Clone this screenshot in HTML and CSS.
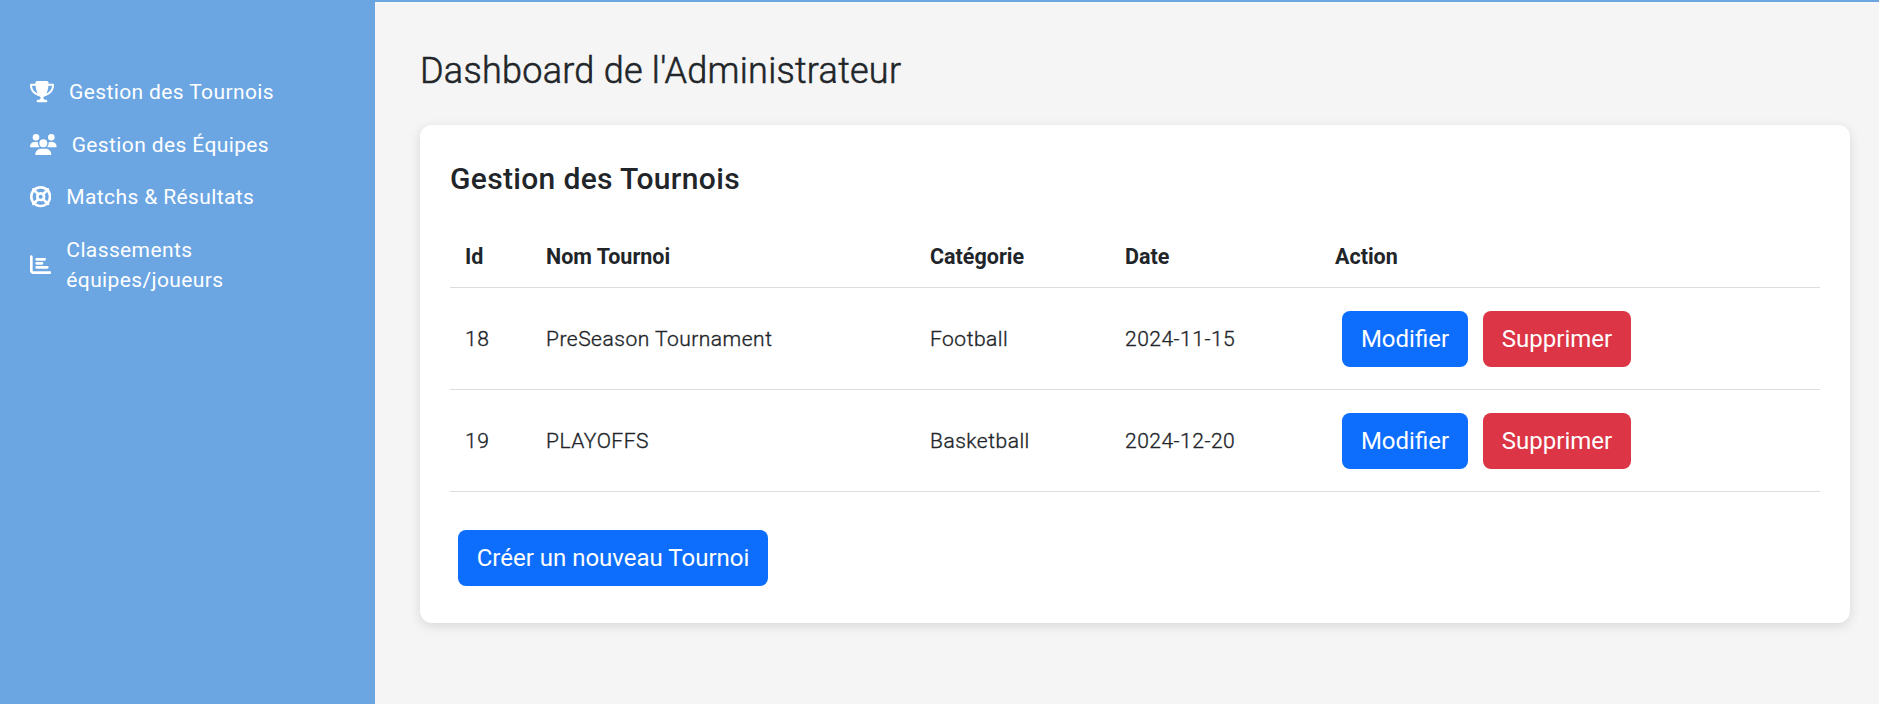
FILE: index.html
```
<!DOCTYPE html>
<html lang="fr">
<head>
<meta charset="utf-8">
<title>Dashboard de l'Administrateur</title>
<link rel="stylesheet" href="styles.css">
</head>
<body>
<div class="layout">
  <nav class="sidebar">
    <a class="nav-link">
      <svg class="icon icon-trophy" viewBox="0 0 576 512"><path d="M400 0H176c-26.5 0-48.1 21.8-47.1 48.2c.2 5.3 .4 10.6 .7 15.8H24C10.7 64 0 74.7 0 88c0 92.6 33.5 157 78.5 200.7c44.3 43.1 98.3 64.8 138.1 75.8c23.4 6.5 39.4 26 39.4 45.6c0 20.9-17 37.9-37.9 37.9H192c-17.7 0-32 14.3-32 32s14.3 32 32 32H384c17.7 0 32-14.3 32-32s-14.3-32-32-32H357.9C337 448 320 431 320 410.1c0-19.6 15.9-39.2 39.4-45.6c39.9-11 93.9-32.7 138.2-75.8C542.5 245 576 180.6 576 88c0-13.3-10.7-24-24-24H446.4c.3-5.2 .5-10.4 .7-15.8C448.1 21.8 426.5 0 400 0zM48.9 112h84.4c9.1 90.1 29.2 150.3 51.9 190.6c-24.9-11-50.8-26.5-73.2-48.3c-32-31.1-58-76-63-142.3zM464.1 254.3c-22.4 21.8-48.3 37.3-73.2 48.3c22.7-40.3 42.8-100.5 51.9-190.6h84.4c-5.1 66.3-31.1 111.2-63 142.3z"/></svg>
      <span>Gestion des Tournois</span>
    </a>
    <a class="nav-link">
      <svg class="icon icon-users" viewBox="0 0 640 512"><path d="M144 0a80 80 0 1 1 0 160A80 80 0 1 1 144 0zM512 0a80 80 0 1 1 0 160A80 80 0 1 1 512 0zM0 298.7C0 239.8 47.8 192 106.7 192h42.7c15.9 0 31 3.5 44.6 9.7c-1.3 7.2-1.9 14.7-1.9 22.3c0 38.2 16.8 72.5 43.3 96c-.2 0-.4 0-.7 0H21.3C9.6 320 0 310.4 0 298.7zM405.3 320c-.2 0-.4 0-.7 0c26.6-23.5 43.3-57.8 43.3-96c0-7.6-.7-15-1.9-22.3c13.6-6.3 28.7-9.7 44.6-9.7h42.7C592.2 192 640 239.8 640 298.7c0 11.8-9.6 21.3-21.3 21.3H405.3zM224 224a96 96 0 1 1 192 0 96 96 0 1 1 -192 0zM128 485.3C128 411.7 187.7 352 261.3 352H378.7C452.3 352 512 411.7 512 485.3c0 14.7-11.9 26.7-26.7 26.7H154.7c-14.7 0-26.7-11.9-26.7-26.7z"/></svg>
      <span>Gestion des Équipes</span>
    </a>
    <a class="nav-link">
      <svg class="icon" viewBox="0 0 512 512"><path d="M367.2 412.5C335.9 434.9 297.5 448 256 448s-79.9-13.1-111.2-35.5l58-58c15.8 8.6 34 13.5 53.3 13.5s37.4-4.9 53.3-13.5l58 58zm90.7 .8c33.8-43.4 54-98 54-157.3s-20.2-113.9-54-157.3c9-12.5 7.9-30.1-3.4-41.3S425.8 45 413.3 54C369.9 20.2 315.3 0 256 0S142.1 20.2 98.7 54c-12.5-9-30.1-7.9-41.3 3.4S45 86.2 54 98.7C20.2 142.1 0 196.7 0 256s20.2 113.9 54 157.3c-9 12.5-7.9 30.1 3.4 41.3S86.2 467 98.7 458c43.4 33.8 98 54 157.3 54s113.9-20.2 157.3-54c12.5 9 30.1 7.9 41.3-3.4s12.4-28.8 3.4-41.3zm-45.5-46.1l-58-58c8.6-15.8 13.5-34 13.5-53.3s-4.9-37.4-13.5-53.3l58-58C434.9 176.1 448 214.5 448 256s-13.1 79.9-35.5 111.2zM367.2 99.5l-58 58c-15.8-8.6-34-13.5-53.3-13.5s-37.4 4.9-53.3 13.5l-58-58C176.1 77.1 214.5 64 256 64s79.9 13.1 111.2 35.5zM157.5 309.3l-58 58C77.1 335.9 64 297.5 64 256s13.1-79.9 35.5-111.2l58 58c-8.6 15.8-13.5 34-13.5 53.3s4.9 37.4 13.5 53.3zM208 256a48 48 0 1 1 96 0 48 48 0 1 1 -96 0z"/></svg>
      <span>Matchs &amp; Résultats</span>
    </a>
    <a class="nav-link">
      <svg class="icon" viewBox="0 0 512 512"><path d="M32 32c17.7 0 32 14.3 32 32V400c0 8.8 7.2 16 16 16H480c17.7 0 32 14.3 32 32s-14.3 32-32 32H80c-44.2 0-80-35.8-80-80V64C0 46.3 14.3 32 32 32zm96 96c0-17.7 14.3-32 32-32l192 0c17.7 0 32 14.3 32 32s-14.3 32-32 32l-192 0c-17.7 0-32-14.3-32-32zm32 64H288c17.7 0 32 14.3 32 32s-14.3 32-32 32H160c-17.7 0-32-14.3-32-32s14.3-32 32-32zm0 96H416c17.7 0 32 14.3 32 32s-14.3 32-32 32H160c-17.7 0-32-14.3-32-32s14.3-32 32-32z"/></svg>
      <span>Classements<br>équipes/joueurs</span>
    </a>
  </nav>
  <main class="content">
    <h1 class="page-title">Dashboard de l'Administrateur</h1>
    <section class="card">
      <h2 class="card-title">Gestion des Tournois</h2>
      <table class="table">
        <colgroup><col class="col-id"><col class="col-name"><col class="col-category"><col class="col-date"><col></colgroup>
        <thead>
          <tr><th>Id</th><th>Nom Tournoi</th><th>Catégorie</th><th>Date</th><th>Action</th></tr>
        </thead>
        <tbody>
          <tr><td>18</td><td>PreSeason Tournament</td><td>Football</td><td>2024-11-15</td>
            <td><div class="actions"><button class="btn btn-primary btn-edit">Modifier</button><button class="btn btn-danger">Supprimer</button></div></td></tr>
          <tr><td>19</td><td>PLAYOFFS</td><td>Basketball</td><td>2024-12-20</td>
            <td><div class="actions"><button class="btn btn-primary btn-edit">Modifier</button><button class="btn btn-danger">Supprimer</button></div></td></tr>
        </tbody>
      </table>
      <button class="btn btn-primary btn-create">Créer un nouveau Tournoi</button>
    </section>
  </main>
</div>
</body>
</html>
```
FILE: styles.css
```
* { box-sizing: border-box; }

body {
  margin: 0;
  background: #f5f5f5;
  color: #212529;
  font-family: Roboto, sans-serif;
  font-size: 21px;
  line-height: 30px;
}

.layout { display: flex; height: 704px; overflow: hidden; }

.sidebar {
  display: flex;
  flex-direction: column;
  gap: 22.5px;
  width: 375px;
  flex: none;
  padding: 77px 30px 0;
  background: #6ba6e3;
  color: #fff;
  letter-spacing: 0.38px;
}

.nav-link { display: flex; align-items: center; gap: 15px; }

.icon { width: 21.33px; height: 21.33px; flex: none; fill: #fff; }
.icon-trophy { width: 24px; }
.icon-users { width: 26.67px; }

.content {
  flex: 1;
  padding: 47px 29px 0 45px;
  border-top: 2px solid #6ba6e3;
}

.page-title {
  margin: 0 0 31px;
  font-size: 36px;
  line-height: 45px;
  font-weight: 300;
  letter-spacing: 0.27px;
  -webkit-text-stroke: 0.55px #212529;
}

.card {
  height: 498px;
  padding: 30px;
  border-radius: 12px;
  background: #fff;
  box-shadow: 0 3px 12px rgba(0, 0, 0, 0.12);
}

.card-title {
  margin: 5px 0 27px;
  font-size: 30px;
  line-height: 38px;
  font-weight: 500;
  letter-spacing: 0.33px;
}

.table {
  width: 100%;
  border-collapse: separate;
  border-spacing: 0;
  table-layout: fixed;
}

.col-id { width: 81px; }
.col-name { width: 384px; }
.col-category { width: 195px; }
.col-date { width: 210px; }

.table th, .table td {
  padding: 0 15px;
  border-bottom: 1px solid #dcdddd;
  text-align: left;
  vertical-align: middle;
}

.table th { height: 63px; padding-top: 2px; font-size: 21.5px; font-weight: 700; }
.table td {
  height: 102px;
  font-weight: 300;
  letter-spacing: 0.5px;
  -webkit-text-stroke: 0.35px #212529;
}

.actions { display: flex; gap: 15px; padding-left: 7px; }

.btn {
  height: 56px;
  padding: 0;
  border: 0;
  border-radius: 8px;
  color: #fff;
  font-family: inherit;
  font-size: 24px;
  line-height: 36px;
  width: 148px;
  -webkit-text-stroke: 0;
}

.btn-edit { width: 126px; }
.btn-primary { background: #0d6efd; }
.btn-danger { background: #dc3545; }
.btn-create { width: 310px; margin: 38px 0 0 8px; }
```
